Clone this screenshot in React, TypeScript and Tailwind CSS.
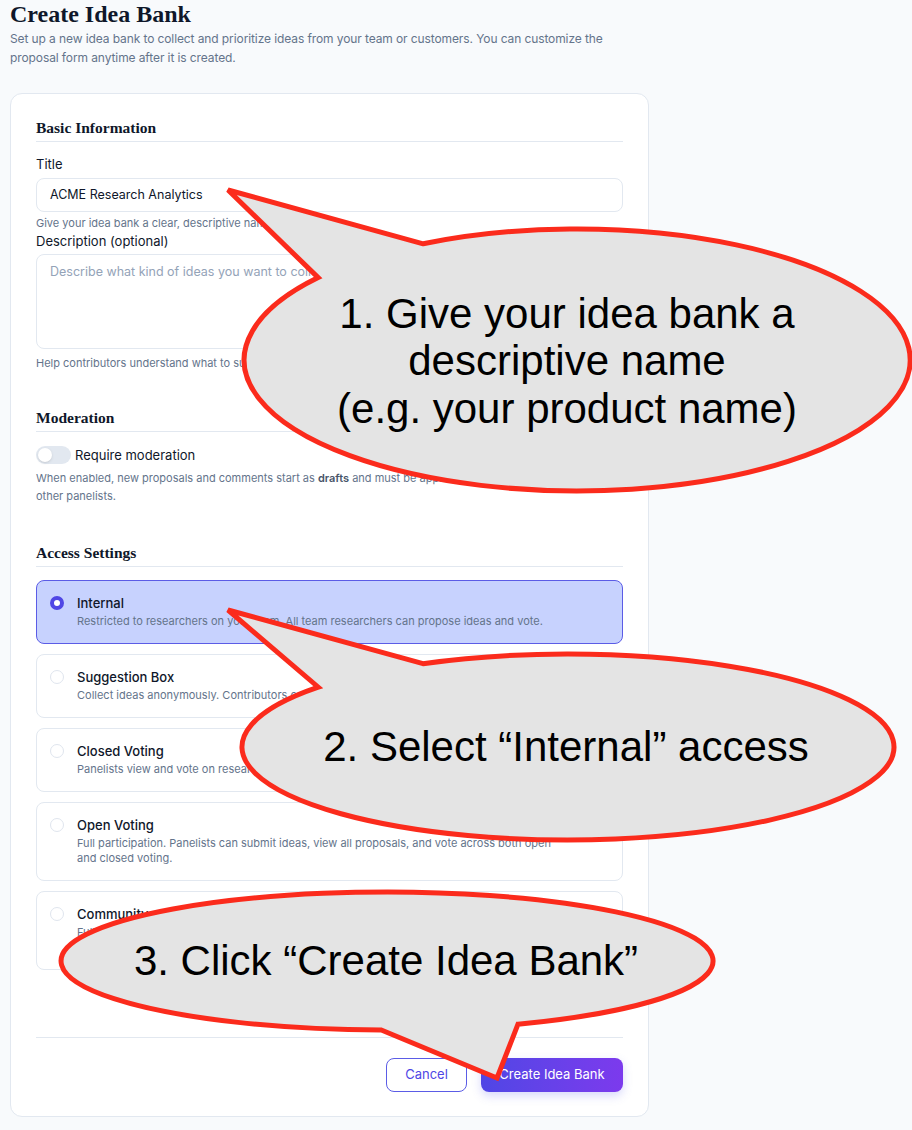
import React from "react";

const options = [
  {
    id: "internal",
    title: "Internal",
    desc: ["Restricted to researchers on your team. All team researchers can propose ideas and vote."],
  },
  {
    id: "suggestion",
    title: "Suggestion Box",
    desc: ["Collect ideas anonymously. Contributors can submit proposals but cannot see each other's ideas."],
  },
  {
    id: "closed",
    title: "Closed Voting",
    desc: ["Panelists view and vote on research team proposals but cannot submit their own."],
  },
  {
    id: "open",
    title: "Open Voting",
    desc: [
      "Full participation. Panelists can submit ideas, view all proposals, and vote across both open",
      "and closed voting.",
    ],
  },
  {
    id: "community",
    title: "Community",
    desc: [
      "Fully public. Anyone with the link can submit ideas, comment on proposals and vote on",
      "everything in the idea bank.",
    ],
  },
];

const pt = (cx: number, cy: number, rx: number, ry: number, deg: number) => {
  const r = (deg * Math.PI) / 180;
  return `${(cx + rx * Math.cos(r)).toFixed(1)} ${(cy + ry * Math.sin(r)).toFixed(1)}`;
};

// speech bubble: ellipse with a tail, the arc runs the long way from joint a2 back to a1
const bubble = (
  cx: number,
  cy: number,
  rx: number,
  ry: number,
  a1: number,
  a2: number,
  tip: [number, number]
) =>
  `M ${pt(cx, cy, rx, ry, a1)} L ${tip[0]} ${tip[1]} L ${pt(cx, cy, rx, ry, a2)} A ${rx} ${ry} 0 1 0 ${pt(cx, cy, rx, ry, a1)} Z`;

const Callouts = () => (
  <svg
    className="absolute left-0 top-0 pointer-events-none"
    width={912}
    height={1130}
    viewBox="0 0 912 1130"
  >
    <g fill="#e4e4e4" stroke="#fb2b1c" strokeWidth={5} strokeLinejoin="miter">
      <path d={bubble(577, 360, 333, 131, -117.5, -141, [228, 190])} />
      <path d={bubble(568, 747, 326, 93, -116.4, -140, [228, 610])} />
      <path d={bubble(387, 961, 326, 69, 91, 66.3, [497, 1078])} />
    </g>
    <g
      fill="#000"
      fontFamily="'Liberation Sans', Arial, sans-serif"
      fontSize={42}
      textAnchor="middle"
      dominantBaseline="central"
    >
      <text x={567} y={313}>1. Give your idea bank a</text>
      <text x={567} y={360}>descriptive name</text>
      <text x={567} y={408}>(e.g. your product name)</text>
      <text x={566} y={746}>2. Select “Internal” access</text>
      <text x={386} y={960}>3. Click “Create Idea Bank”</text>
    </g>
  </svg>
);

const SectionHeading = ({ children }: { children: React.ReactNode }) => (
  <h2 className="font-['Liberation_Serif',serif] font-bold text-[15.5px] leading-[20px] text-[#0f172a] pb-[3px] border-b border-[#e2e8f0]">
    {children}
  </h2>
);

const AccessOption = ({
  title,
  desc,
  selected,
}: {
  title: string;
  desc: string[];
  selected: boolean;
}) => (
  <div
    className={
      selected
        ? "flex items-start rounded-lg border border-[#5b5ce6] bg-[#c7d2fe] px-[13px] pt-[13px] pb-[14px]"
        : "flex items-start rounded-lg border border-[#e2e8f0] bg-white px-[13px] pt-[13px] pb-[14px]"
    }
  >
    <span
      className={
        selected
          ? "mt-[2px] w-[14px] h-[14px] rounded-full border-[4px] border-[#4f46e5] bg-white shrink-0"
          : "mt-[2px] w-[14px] h-[14px] rounded-full border border-[#dfe5ee] bg-white shrink-0"
      }
    />
    <div className="ml-[13px]">
      <div className="text-[13px] leading-[18px] font-medium text-[#0f172a]">{title}</div>
      <div className="mt-[2px] text-[11px] leading-[15px] text-[#64748b]">
        {desc.map((line, i) => (
          <div key={i}>{line}</div>
        ))}
      </div>
    </div>
  </div>
);

export default function App() {
  return (
    <div className="relative min-h-[1130px] w-[912px] overflow-hidden bg-[#f8fafc] font-['Inter',sans-serif] px-[10px]">
      <h1 className="font-['Liberation_Serif',serif] font-bold text-[24px] leading-[28px] text-[#0f172a]">
        Create Idea Bank
      </h1>
      <p className="mt-[1px] text-[12px] leading-[19px] tracking-[-0.1px] text-[#64748b] w-[620px]">
        Set up a new idea bank to collect and prioritize ideas from your team or customers. You can customize the
        proposal form anytime after it is created.
      </p>

      <div className="mt-[26px] w-[639px] rounded-xl border border-[#e2e8f0] bg-white px-[25px] pt-[24px] pb-6">
        <SectionHeading>Basic Information</SectionHeading>

        <label className="block mt-[13px] text-[13px] leading-[18px] text-[#0f172a]">Title</label>
        <div className="mt-[5px] h-[34px] rounded-lg border border-[#e2e8f0] flex items-center px-[13px] text-[12.5px] text-[#0f172a]">
          ACME Research Analytics
        </div>
        <p className="mt-[3px] text-[11px] leading-[16px] text-[#64748b]">
          Give your idea bank a clear, descriptive name.
        </p>

        <label className="block mt-[1px] text-[13px] leading-[18px] text-[#0f172a]">Description (optional)</label>
        <div className="mt-[4px] h-[95px] rounded-lg border border-[#e2e8f0] px-[13px] pt-[8px] text-[12.5px] leading-[18px] text-[#94a3b8]">
          Describe what kind of ideas you want to collect...
        </div>
        <p className="mt-[6px] text-[11px] leading-[16px] text-[#64748b]">
          Help contributors understand what to submit.
        </p>

        <div className="mt-[37px]">
          <SectionHeading>Moderation</SectionHeading>
        </div>
        <div className="mt-[14px] flex items-center">
          <span className="relative w-[35px] h-[18px] rounded-full bg-[#e2e8f0] shrink-0">
            <span className="absolute left-[2px] top-[2px] w-[14px] h-[14px] rounded-full bg-white shadow-sm" />
          </span>
          <span className="ml-[4px] text-[13px] leading-[18px] text-[#0f172a]">Require moderation</span>
        </div>
        <p className="mt-[5px] text-[11px] leading-[18px] text-[#64748b]">
          When enabled, new proposals and comments start as <span className="font-semibold text-[#475569]">drafts</span>{" "}
          and must be approved before they are visible to
          <br />
          other panelists.
        </p>

        <div className="mt-[38px]">
          <SectionHeading>Access Settings</SectionHeading>
        </div>
        <div className="mt-[13px] flex flex-col gap-[10px]">
          {options.map((o) => (
            <AccessOption key={o.id} title={o.title} desc={o.desc} selected={o.id === "internal"} />
          ))}
        </div>

        <div className="mt-[67px] border-t border-[#e2e8f0] pt-[20px] flex justify-end gap-[14px]">
          <button className="h-[34px] w-[81px] rounded-lg border border-[#5b5ce6] bg-white text-[13px] text-[#4f46e5]">
            Cancel
          </button>
          <button className="h-[34px] w-[142px] rounded-lg bg-gradient-to-r from-[#4f46e5] to-[#7c3aed] text-[13px] text-white shadow-[0_4px_10px_rgba(99,102,241,0.25)]">
            Create Idea Bank
          </button>
        </div>
      </div>

      <Callouts />
    </div>
  );
}
